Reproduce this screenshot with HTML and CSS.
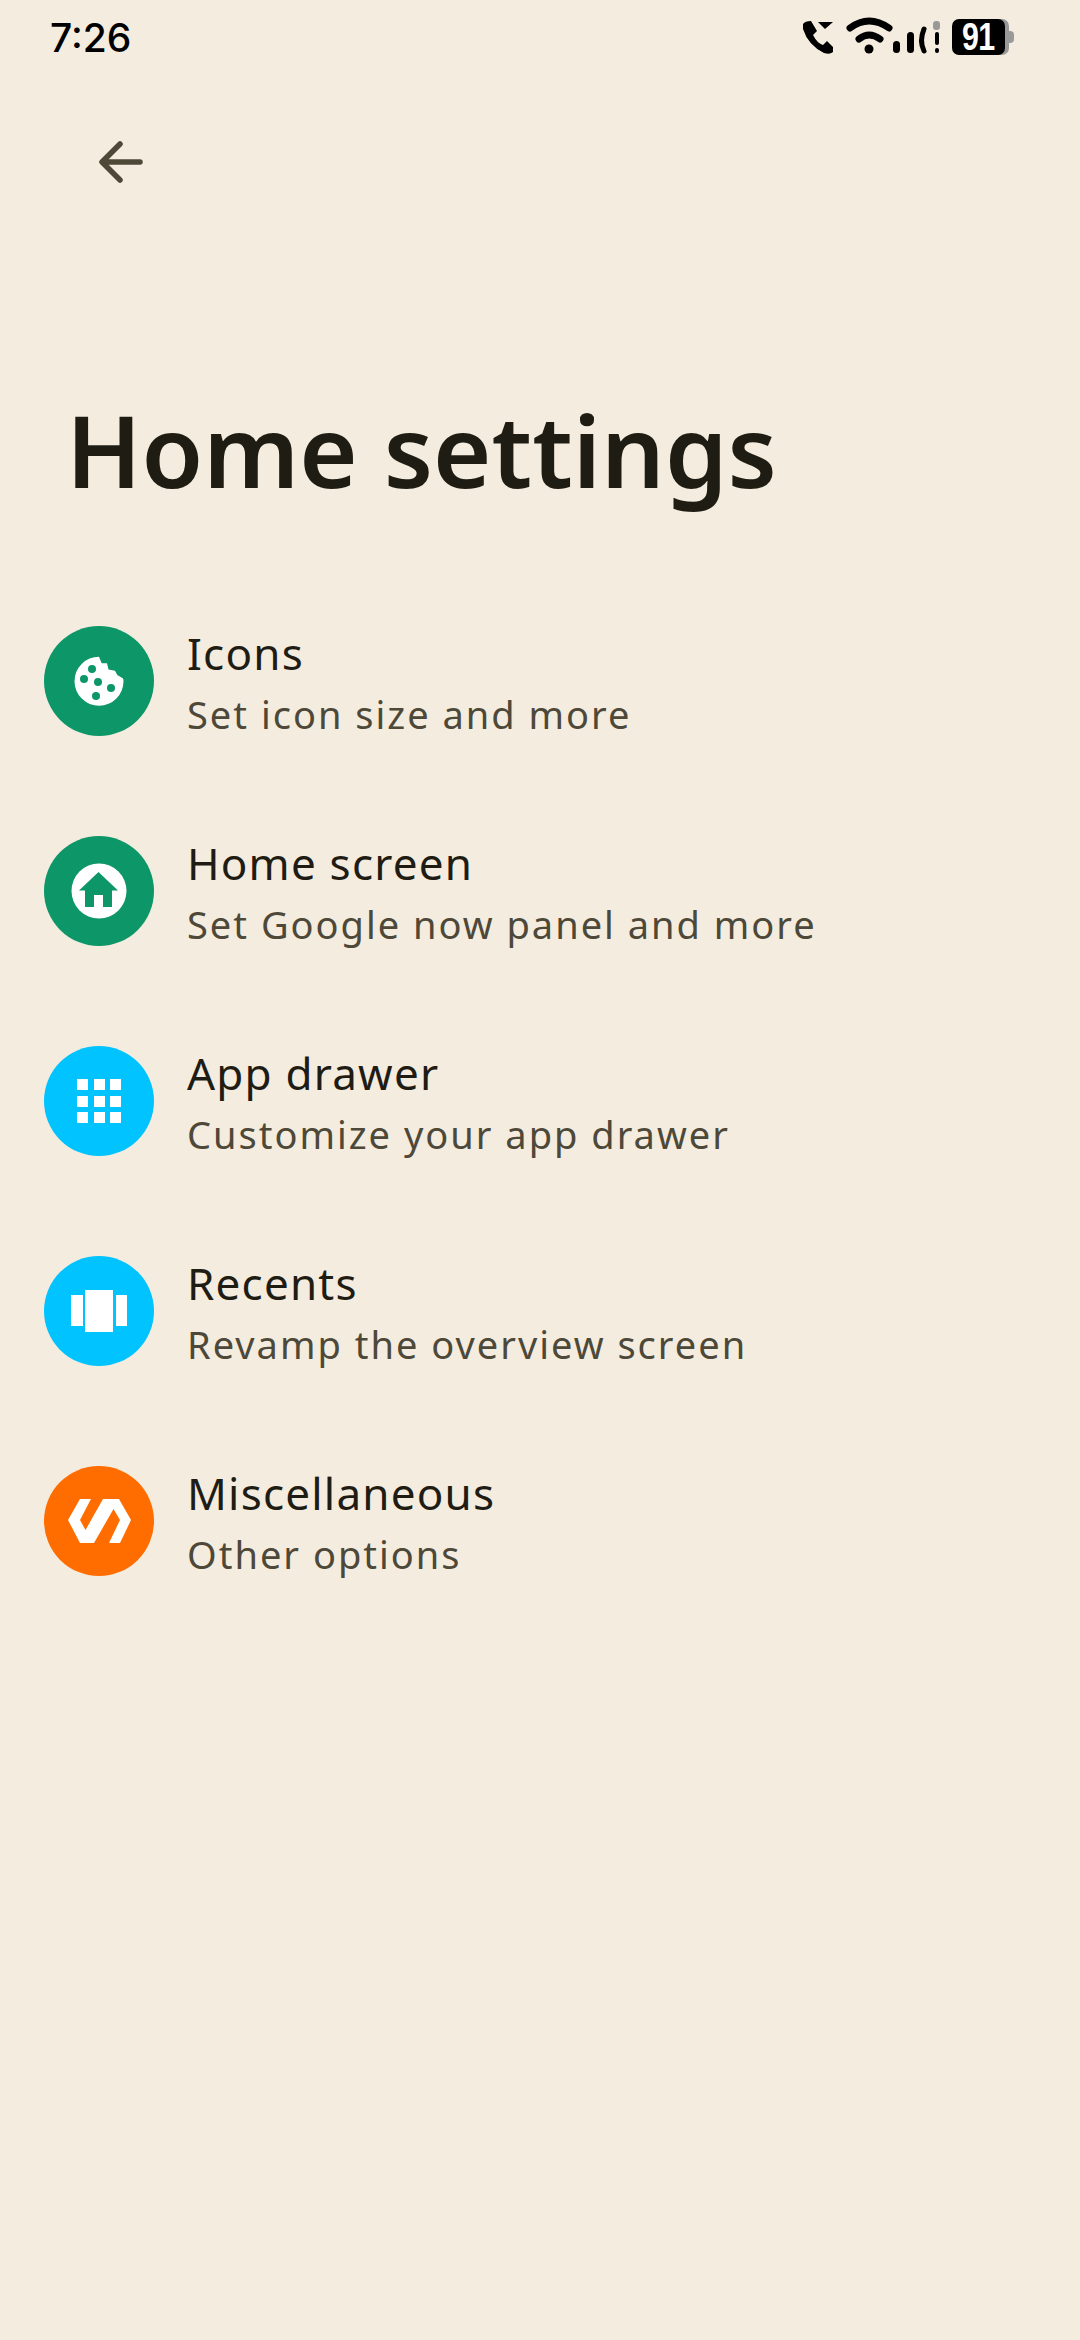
FILE: index.html
```html
<!DOCTYPE html>
<html lang="en">
<head>
    <meta charset="UTF-8">
    <meta name="viewport" content="width=device-width, initial-scale=1.0">
    <title>Home settings</title>
    <link rel="stylesheet" href="styles.css">
</head>
<body>
    <div class="status-bar">
        <span class="time">7:26</span>
        <div class="status-icons">
            <svg class="status-svg" width="140" height="40" viewBox="0 0 140 40">
                <!-- call -->
                <path d="M1 7 Q3 4 9 4 L15 14 L11 18 Q15 26 21 28 L25 24 L31 30 V35 Q28 38 22 36 Q6 28 1 12 Z" fill="#000"/>
                <path d="M16 5 H31 L23 12 Z" fill="#000"/>
                <!-- wifi -->
                <path d="M48 11 Q67 -3 87 11" fill="none" stroke="#000" stroke-width="7" stroke-linecap="round"/>
                <path d="M57 22 Q67 14 78 22" fill="none" stroke="#000" stroke-width="7" stroke-linecap="round"/>
                <circle cx="67" cy="32" r="4.5" fill="#000"/>
                <!-- signal -->
                <rect x="91" y="24" width="7" height="12" rx="3.5" fill="#000"/>
                <rect x="105" y="15" width="7" height="21" rx="3.5" fill="#000"/>
                <path d="M122 12 Q117 24 122 34" fill="none" stroke="#000" stroke-width="5" stroke-linecap="round"/>
                <rect x="131" y="4" width="7" height="9" rx="3" fill="#999"/>
                <rect x="133" y="15" width="4" height="13" rx="2" fill="#000"/>
                <rect x="133" y="31" width="4" height="5" rx="2" fill="#000"/>
            </svg>
            <div class="battery">
                <div class="battery-level"><span class="battery-digits">91</span></div>
                <span class="battery-cap"></span>
            </div>
        </div>
    </div>

    <div class="toolbar">
        <svg width="48" height="48" viewBox="0 0 48 48">
            <path d="M42 24 H6 M22 6 L4 24 L22 42" fill="none" stroke="#4d4838" stroke-width="5.5" stroke-linecap="round" stroke-linejoin="round"/>
        </svg>
    </div>

    <h1 class="title">Home settings</h1>

    <div class="settings-list">
        <div class="row">
            <div class="icon icon-green">
                <svg width="50" height="50" viewBox="0 0 50 50">
                    <path d="M25 .7 L27.7 7.3 L33 7.3 L34.5 13.5 L41 14.7 L43.3 19 L48.7 22.3 Q49.5 23 49.5 25 A24.5 24.5 0 1 1 25 .7 Z" fill="#fff"/>
                    <circle cx="18" cy="13" r="4" fill="#0d9668"/>
                    <circle cx="10" cy="23" r="4" fill="#0d9668"/>
                    <circle cx="24" cy="26" r="4" fill="#0d9668"/>
                    <circle cx="37" cy="32" r="4" fill="#0d9668"/>
                    <circle cx="22" cy="40" r="4" fill="#0d9668"/>
                </svg>
            </div>
            <div class="row-text">
                <div class="row-title">Icons</div>
                <div class="row-summary">Set icon size and more</div>
            </div>
        </div>

        <div class="row">
            <div class="icon icon-green">
                <svg width="56" height="56" viewBox="0 0 56 56">
                    <circle cx="28" cy="28" r="27.5" fill="#fff"/>
                    <path d="M27.5 9 L47 27.5 H41 V44 H32 V32 H23 V44 H14 V27.5 H8 Z" fill="#0d9668"/>
                </svg>
            </div>
            <div class="row-text">
                <div class="row-title">Home screen</div>
                <div class="row-summary">Set Google now panel and more</div>
            </div>
        </div>

        <div class="row">
            <div class="icon icon-blue">
                <div class="dot-grid">
                    <span></span><span></span><span></span>
                    <span></span><span></span><span></span>
                    <span></span><span></span><span></span>
                </div>
            </div>
            <div class="row-text">
                <div class="row-title">App drawer</div>
                <div class="row-summary">Customize your app drawer</div>
            </div>
        </div>

        <div class="row">
            <div class="icon icon-blue">
                <svg width="56" height="42" viewBox="0 0 56 42">
                    <rect x="0" y="5" width="12" height="31" fill="#fff"/>
                    <rect x="14" y="0" width="28" height="42" fill="#fff"/>
                    <rect x="45" y="5" width="11" height="31" fill="#fff"/>
                </svg>
            </div>
            <div class="row-text">
                <div class="row-title">Recents</div>
                <div class="row-summary">Revamp the overview screen</div>
            </div>
        </div>

        <div class="row">
            <div class="icon icon-orange">
                <svg width="63" height="44" viewBox="0 0 63 44">
                    <path d="M12 0 H23 L12 21 L17.5 31 L35 0 H51 L63 21 L52 44 H41 L52 21 L45.5 10 L26 44 H12 L0 21 Z" fill="#fff"/>
                </svg>
            </div>
            <div class="row-text">
                <div class="row-title">Miscellaneous</div>
                <div class="row-summary">Other options</div>
            </div>
        </div>
    </div>
</body>
</html>
```

FILE: styles.css
```css
body {
    font-family: "Noto Sans", sans-serif;
    background-color: #f4ecdf;
    margin: 0;
    width: 1080px;
    height: 2340px;
    overflow: hidden;
}

.status-bar {
    display: flex;
    justify-content: space-between;
    align-items: center;
    height: 74px;
    padding: 0 66px 0 50px;
}

.time {
    font-family: Inter, sans-serif;
    font-size: 39px;
    font-weight: 500;
    color: #000;
}

.status-icons {
    display: flex;
    align-items: center;
    gap: 10px;
}

.status-svg {
    display: block;
}

.battery {
    display: flex;
    align-items: center;
}

.battery-level {
    width: 53px;
    height: 36px;
    background: #000;
    border-radius: 7px;
    color: #fff;
    font-family: "Liberation Sans", sans-serif;
    font-size: 38px;
    font-weight: 700;
    line-height: 36px;
    text-align: center;
    box-shadow: 4px 0 0 #999;
}

.battery-digits {
    display: inline-block;
    transform: scaleX(0.8);
    letter-spacing: -1px;
}

.battery-cap {
    width: 5px;
    height: 12px;
    margin-left: 4px;
    background: #999;
    border-radius: 0 4px 4px 0;
}

.toolbar {
    padding: 64px 0 0 98px;
    height: 98px;
}

.toolbar svg {
    display: block;
}

.title {
    font-size: 100px;
    font-weight: 600;
    line-height: 130px;
    color: #1e1c13;
    margin: 148px 0 0 66px;
    letter-spacing: 0;
}

.settings-list {
    margin-top: 62px;
}

.row {
    display: flex;
    align-items: center;
    height: 210px;
    padding-left: 44px;
}

.icon {
    display: flex;
    align-items: center;
    justify-content: center;
    width: 110px;
    height: 110px;
    border-radius: 50%;
    flex-shrink: 0;
}

.icon-green {
    background: #0d9668;
}

.icon-blue {
    background: #00c3ff;
}

.icon-orange {
    background: #ff6d00;
}

.dot-grid {
    display: grid;
    grid-template-columns: repeat(3, 11px);
    grid-auto-rows: 11px;
    gap: 5.5px;
}

.dot-grid span {
    background: #fff;
}

.row-text {
    margin-left: 33px;
    padding-top: 6px;
}

.row-title {
    font-size: 44px;
    line-height: 60px;
    color: #1e1c13;
    letter-spacing: 1.2px;
}

.row-summary {
    font-size: 38px;
    line-height: 62px;
    color: #4d4838;
    letter-spacing: 2px;
}
```
